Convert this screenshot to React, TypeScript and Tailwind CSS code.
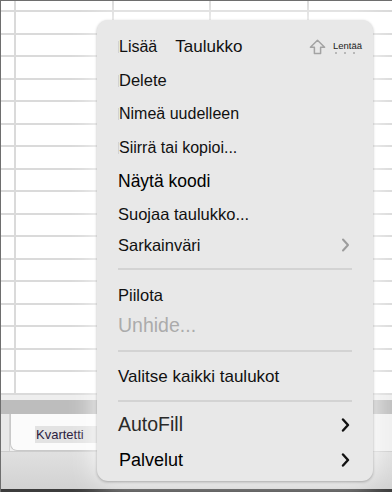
const FONT = { fontFamily: '"Liberation Sans", Arial, sans-serif' };

const ROWS = Array.from({ length: 17 });

function GridRow({ first = false }: { first?: boolean }) {
  return (
    <div
      className={`flex shrink-0 border-b-2 border-[#dadada] ${first ? "h-[11px]" : "h-[22.5px]"}`}
    >
      <div className="w-[15px] shrink-0 border-r-2 border-[#dadada]" />
      <div className="w-[98px] shrink-0 border-r-2 border-[#dadada]" />
      <div className="w-[97px] shrink-0 border-r-2 border-[#dadada]" />
      <div className="w-[98px] shrink-0 border-r-2 border-[#dadada]" />
      <div className="flex-1" />
    </div>
  );
}

function Caret() {
  return <span className="-ml-px inline-block h-[12px] w-px bg-[#d2d2d2]" />;
}

function Chevron({ gray = false }: { gray?: boolean }) {
  return (
    <svg width="9" height="14" viewBox="0 0 9 14" fill="none">
      <path
        d="M2 1.5 L7 7 L2 12.5"
        stroke={gray ? "#9c9c9c" : "#111"}
        strokeWidth={gray ? 2 : 2.4}
        strokeLinecap="round"
        strokeLinejoin="round"
      />
    </svg>
  );
}

function ShiftIcon() {
  return (
    <svg width="17" height="16" viewBox="0 0 17 16" fill="none">
      <path
        d="M8.5 1.2 L15.6 8.2 H11.6 V14.6 H5.4 V8.2 H1.4 Z"
        stroke="#a3a3a3"
        strokeWidth="1.5"
        strokeLinejoin="round"
      />
    </svg>
  );
}

function Separator({ className }: { className: string }) {
  return <div className={`mx-[21px] h-[2px] bg-[#d3d3d3] ${className}`} />;
}

export default function App() {
  return (
    <div
      className="relative flex h-[492px] w-[392px] flex-col overflow-hidden border-l border-t border-[#6e6e6e] bg-white"
      style={FONT}
    >
      {/* sheet grid */}
      <div className="flex flex-col">
        <GridRow first />
        {ROWS.map((_, i) => (
          <GridRow key={i} />
        ))}
      </div>
      <div className="h-[5px] shrink-0 bg-[#eeeeee]" />
      <div className="h-[14px] shrink-0 bg-[#bdbdbd]" />

      {/* tab bar */}
      <div className="flex h-[37px] shrink-0 bg-[#efefef]">
        <div className="w-[9px] shrink-0 border-r border-[#d2d2d2] bg-[#e9e9e9]" />
        <div className="flex w-[110px] items-center rounded-bl-[7px] border-b border-l border-[#c9c9c9] bg-[#fbfbfb] pl-[24px] pt-[6px]">
          <span className="bg-[#e3e3e3] pl-[1px] pr-[14px] text-[13px] leading-[17px] text-[#2b2140]">
            Kvartetti
          </span>
        </div>
      </div>
      <div className="h-px shrink-0 bg-[#cdcdcd]" />
      <div className="flex-1 bg-gradient-to-b from-[#e0e0e0] to-[#d2d2d2]" />
      <div className="h-[3px] shrink-0 bg-[#3c3c3c]" />

      {/* context menu */}
      <div className="absolute left-[96px] top-[19px] flex h-[461px] w-[276px] flex-col rounded-[11px] bg-[#e8e8e8] pt-[10px] text-[#111] shadow-[0_1px_3px_rgba(0,0,0,0.28),0_0_28px_rgba(255,255,255,0.95)]">
        <div className="flex h-[34px] items-center pl-[22px] pr-[11px]">
          <Caret />
          <span className="text-[16px]">Lisää</span>
          <span className="ml-[18px] text-[17px]">Taulukko</span>
          <div className="ml-auto flex items-center gap-[7px]">
            <ShiftIcon />
            <div className="flex flex-col items-start">
              <span className="text-[9.5px] leading-[11px] text-[#222]">Lentää</span>
              <div className="mt-[1px] flex gap-[7px] pl-[2px]">
                <span className="h-[2px] w-[2px] rounded-full bg-[#a8a8a8]" />
                <span className="h-[2px] w-[2px] rounded-full bg-[#a8a8a8]" />
                <span className="h-[2px] w-[2px] rounded-full bg-[#a8a8a8]" />
              </div>
            </div>
          </div>
        </div>
        <div className="flex h-[33px] items-center pl-[22px]">
          <Caret />
          <span className="text-[16.5px]">Delete</span>
        </div>
        <div className="flex h-[34px] items-center pl-[22px]">
          <Caret />
          <span className="text-[16px]">Nimeä uudelleen</span>
        </div>
        <div className="flex h-[33px] items-center pl-[22px]">
          <Caret />
          <span className="text-[16px]">Siirrä tai kopioi...</span>
        </div>
        <div className="flex h-[34px] items-center pl-[21px]">
          <span className="text-[17.5px] text-black">Näytä koodi</span>
        </div>
        <div className="flex h-[32px] items-center pl-[21px]">
          <span className="text-[16.5px]">Suojaa taulukko...</span>
        </div>
        <div className="flex h-[30px] items-center justify-between pl-[21px] pr-[23px]">
          <span className="text-[16.5px]">Sarkainväri</span>
          <Chevron gray />
        </div>

        <Separator className="mt-[8px]" />

        <div className="mt-[9px] flex h-[32px] items-center pl-[21px]">
          <span className="text-[16.5px]">Piilota</span>
        </div>
        <div className="flex h-[30px] items-center pl-[21px]">
          <span className="text-[19.5px] text-[#ababab]">Unhide...</span>
        </div>

        <Separator className="mt-[9px]" />

        <div className="mt-[10px] flex h-[30px] items-center pl-[21px]">
          <span className="text-[17px]">Valitse kaikki taulukot</span>
        </div>

        <Separator className="mt-[8px]" />

        <div className="mt-[7px] flex h-[32px] items-center justify-between pl-[21px] pr-[23px]">
          <span className="text-[19.5px] text-[#2a2a2a]">AutoFill</span>
          <Chevron />
        </div>
        <div className="flex h-[38px] items-center justify-between pl-[22px] pr-[23px]">
          <span className="text-[18px] text-black">Palvelut</span>
          <Chevron />
        </div>
      </div>
    </div>
  );
}
